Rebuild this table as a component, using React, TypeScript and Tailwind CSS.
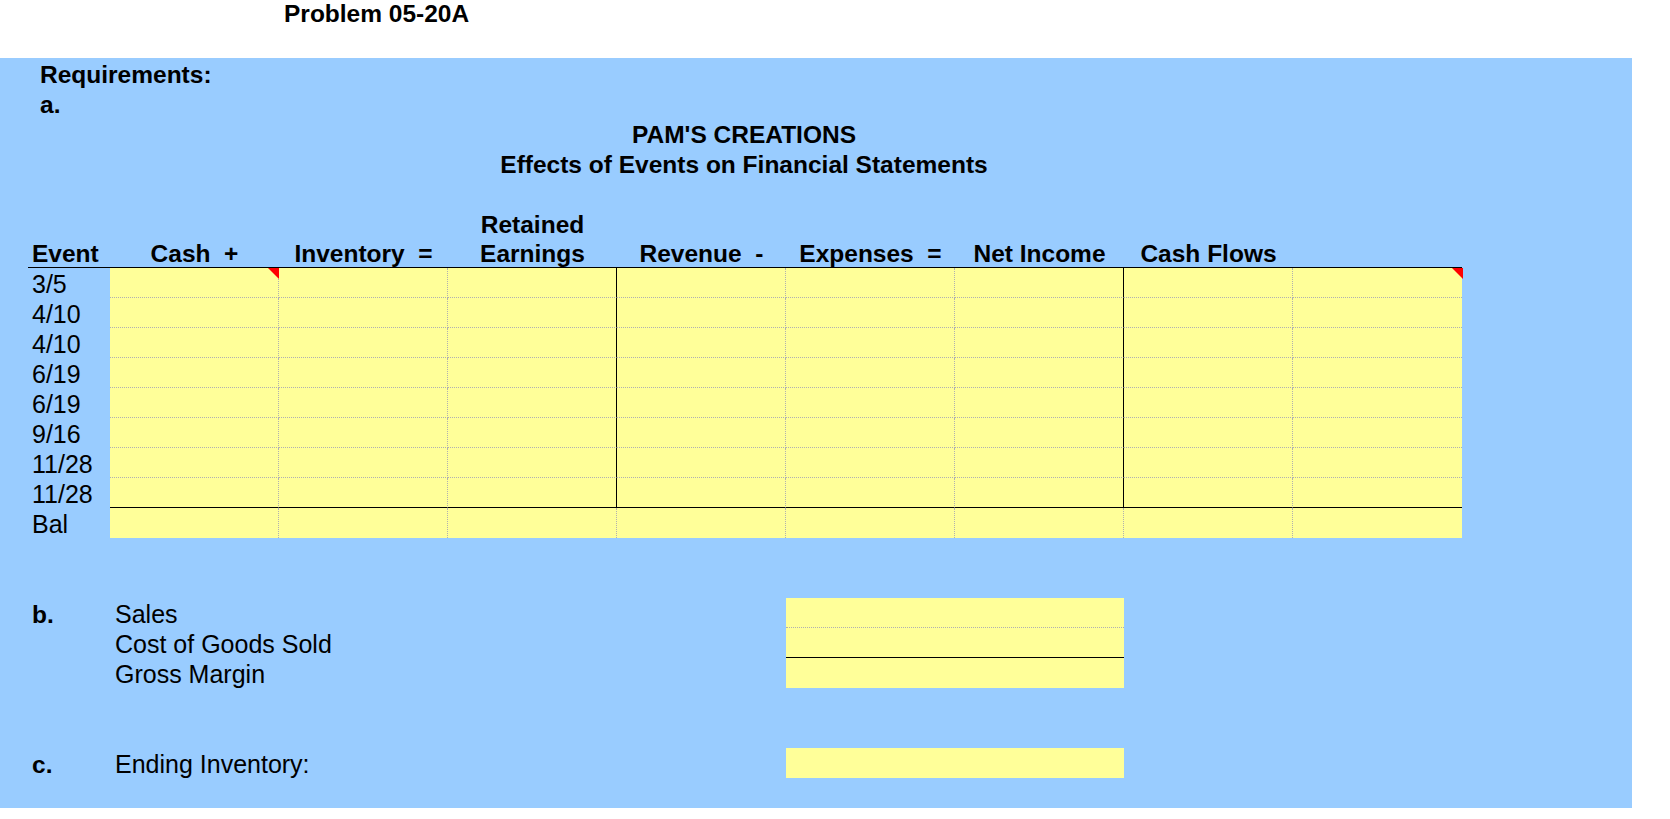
const events = ['3/5', '4/10', '4/10', '6/19', '6/19', '9/16', '11/28', '11/28'];
const headers = ['Cash  +', 'Inventory  =', 'Earnings', 'Revenue  -', 'Expenses  =', 'Net Income', 'Cash Flows', ''];

function Corner() {
  return (
    <svg className="absolute -right-px top-0" width="11" height="11" viewBox="0 0 11 11">
      <polygon points="0,0 11,0 11,11" fill="#ff0000" />
    </svg>
  );
}

// right border of a grid cell: solid black before Revenue and Cash Flows, dotted elsewhere
function rightBorder(ci: number, bal: boolean) {
  if (ci === 7) return '';
  if (!bal && (ci === 2 || ci === 5)) return 'border-r border-r-black [border-right-style:solid]';
  return 'border-r border-r-[#b0b0b0] [border-right-style:dotted]';
}

function bottomBorder(ri: number) {
  if (ri === 7) return 'border-b border-b-black [border-bottom-style:solid]';
  return 'border-b border-b-[#b0b0b0] [border-bottom-style:dotted]';
}

export default function App() {
  return (
    <div className="w-[1670px] h-[819px] bg-white text-black font-['Liberation_Sans',Arial,sans-serif] text-[25px] overflow-hidden">
      <div className="h-[58px] pl-[284px] font-bold text-[24.5px] leading-[28px]">Problem 05-20A</div>

      <div className="w-[1632px] h-[750px] bg-[#99ccff]">
        <div className="h-[30px] pl-[40px] font-bold text-[24.5px] leading-[33px]">Requirements:</div>
        <div className="h-[30px] pl-[40px] font-bold text-[24.5px] leading-[33px]">a.</div>
        <div className="ml-[28px] w-[1432px] text-center font-bold text-[24.5px] leading-[33px]">
          <div className="h-[30px]">PAM'S CREATIONS</div>
          <div className="h-[30px]">Effects of Events on Financial Statements</div>
        </div>
        <div className="h-[30px]" />

        {/* table */}
        <div className="ml-[28px] w-[1434px]">
          <div className="grid grid-cols-[82px_repeat(8,169px)] h-[30px] font-bold text-[24.5px] leading-[33px]">
            <div />
            <div />
            <div />
            <div className="text-center">Retained</div>
          </div>
          <div className="grid grid-cols-[82px_repeat(8,169px)] h-[30px] border-b border-black font-bold text-[24.5px] leading-[32px]">
            <div className="pl-[4px]">Event</div>
            {headers.map((h, i) => (
              <div key={i} className="text-center whitespace-pre">{h}</div>
            ))}
          </div>

          {events.map((ev, ri) => (
            <div key={ri} className="grid grid-cols-[82px_repeat(8,169px)] h-[30px]">
              <div className="pl-[4px] leading-[32px]">{ev}</div>
              {headers.map((_, ci) => (
                <div key={ci} className={`relative h-[30px] bg-[#ffff99] ${bottomBorder(ri)} ${rightBorder(ci, false)}`}>
                  {ri === 0 && (ci === 0 || ci === 7) && <Corner />}
                </div>
              ))}
            </div>
          ))}

          <div className="grid grid-cols-[82px_repeat(8,169px)] h-[30px]">
            <div className="pl-[4px] leading-[32px]">Bal</div>
            {headers.map((_, ci) => (
              <div key={ci} className={`h-[30px] bg-[#ffff99] ${rightBorder(ci, true)}`} />
            ))}
          </div>
        </div>

        {/* b. */}
        <div className="mt-[60px] ml-[28px]">
          <div className="flex h-[30px] leading-[33px]">
            <div className="w-[82px] pl-[4px] font-bold text-[24.5px]">b.</div>
            <div className="w-[676px] pl-[5px]">Sales</div>
            <div className="w-[338px] bg-[#ffff99] border-b border-dotted border-[#b0b0b0]" />
          </div>
          <div className="flex h-[30px] leading-[33px]">
            <div className="w-[82px]" />
            <div className="w-[676px] pl-[5px]">Cost of Goods Sold</div>
            <div className="w-[338px] bg-[#ffff99] border-b border-black" />
          </div>
          <div className="flex h-[30px] leading-[33px]">
            <div className="w-[82px]" />
            <div className="w-[676px] pl-[5px]">Gross Margin</div>
            <div className="w-[338px] bg-[#ffff99]" />
          </div>
        </div>

        {/* c. */}
        <div className="mt-[60px] ml-[28px] flex h-[30px] leading-[33px]">
          <div className="w-[82px] pl-[4px] font-bold text-[24.5px]">c.</div>
          <div className="w-[676px] pl-[5px]">Ending Inventory:</div>
          <div className="w-[338px] bg-[#ffff99]" />
        </div>
      </div>
    </div>
  );
}
